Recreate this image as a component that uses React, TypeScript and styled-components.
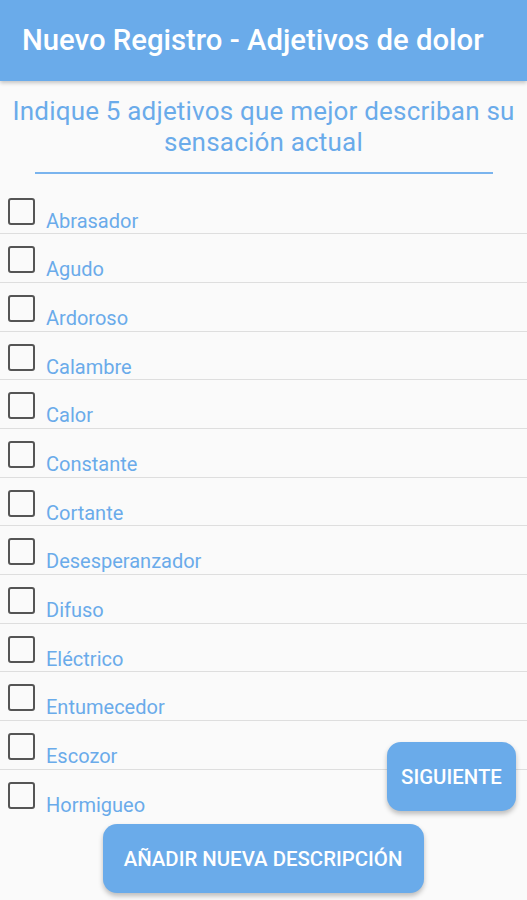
import React from "react";
import styled, { createGlobalStyle } from "styled-components";

const Global = createGlobalStyle`
  html, body { margin: 0; padding: 0; background: #fafafa; }
  body { font-family: Roboto, "Noto Sans", sans-serif; overflow: hidden; }
  * { box-sizing: border-box; }
`;

const Page = styled.div`
  width: 527px;
  height: 900px;
  position: relative;
  overflow: hidden;
  background: #fafafa;
`;

const Header = styled.header`
  height: 81px;
  background: #6aabea;
  display: flex;
  align-items: center;
  padding-left: 22px;
  box-shadow: 0 2px 4px rgba(0, 0, 0, 0.22);
  position: relative;
  z-index: 1;
`;

const Title = styled.h1`
  margin: 0;
  color: #ffffff;
  font-family: Roboto, sans-serif;
  font-weight: 500;
  font-size: 29.3px;
  letter-spacing: 0;
  padding-bottom: 1px;
`;

const Intro = styled.div`
  display: flex;
  flex-direction: column;
  align-items: center;
  padding-top: 15px;
`;

const Prompt = styled.p`
  margin: 0;
  color: #6aabea;
  font-size: 26px;
  line-height: 31px;
  letter-spacing: 0.2px;
  text-align: center;
  padding: 0;
  white-space: nowrap;
`;

const Rule = styled.div`
  width: 458px;
  height: 1.5px;
  background: #7ab4ee;
  margin-top: 14px;
`;

const List = styled.ul`
  list-style: none;
  margin: 12px 0 0;
  padding: 0;
`;

const Row = styled.li<{ $last?: boolean }>`
  height: 48.7px;
  display: flex;
  align-items: flex-start;
  padding: 12px 0 0 8px;
  border-bottom: 1.5px solid ${(p) => (p.$last ? "transparent" : "#dedede")};
`;

const Box = styled.span`
  width: 27px;
  height: 27px;
  flex: none;
  border: 2.8px solid #555555;
  border-radius: 3px;
  background: transparent;
`;

const Label = styled.span`
  margin-left: 11px;
  margin-top: 10px;
  color: #6aabea;
  font-size: 20px;
  line-height: 26px;
`;

const Overlay = styled.div`
  position: absolute;
  left: 0;
  right: 0;
  bottom: 7px;
  display: flex;
  flex-direction: column;
  align-items: center;
  gap: 13px;
`;

const Button = styled.button<{ $wide?: boolean }>`
  height: 69px;
  width: ${(p) => (p.$wide ? "321px" : "129px")};
  align-self: ${(p) => (p.$wide ? "center" : "flex-end")};
  margin-right: ${(p) => (p.$wide ? "1px" : "11px")};
  border: none;
  border-radius: 14px;
  background: #6aabea;
  color: #ffffff;
  font-family: Roboto, sans-serif;
  font-weight: 500;
  font-size: 20.4px;
  letter-spacing: 0;
  box-shadow: 0 3px 5px rgba(0, 0, 0, 0.25);
  padding: 0;
`;

const items = [
  "Abrasador",
  "Agudo",
  "Ardoroso",
  "Calambre",
  "Calor",
  "Constante",
  "Cortante",
  "Desesperanzador",
  "Difuso",
  "Eléctrico",
  "Entumecedor",
  "Escozor",
  "Hormigueo",
];

export default function App() {
  return (
    <Page>
      <Global />
      <Header>
        <Title>Nuevo Registro - Adjetivos de dolor</Title>
      </Header>
      <Intro>
        <Prompt>
          Indique 5 adjetivos que mejor describan su
          <br />
          sensación actual
        </Prompt>
        <Rule />
      </Intro>
      <List>
        {items.map((it, i) => (
          <Row key={it} $last={i === items.length - 1}>
            <Box />
            <Label>{it}</Label>
          </Row>
        ))}
      </List>
      <Overlay>
        <Button>SIGUIENTE</Button>
        <Button $wide>AÑADIR NUEVA DESCRIPCIÓN</Button>
      </Overlay>
    </Page>
  );
}
